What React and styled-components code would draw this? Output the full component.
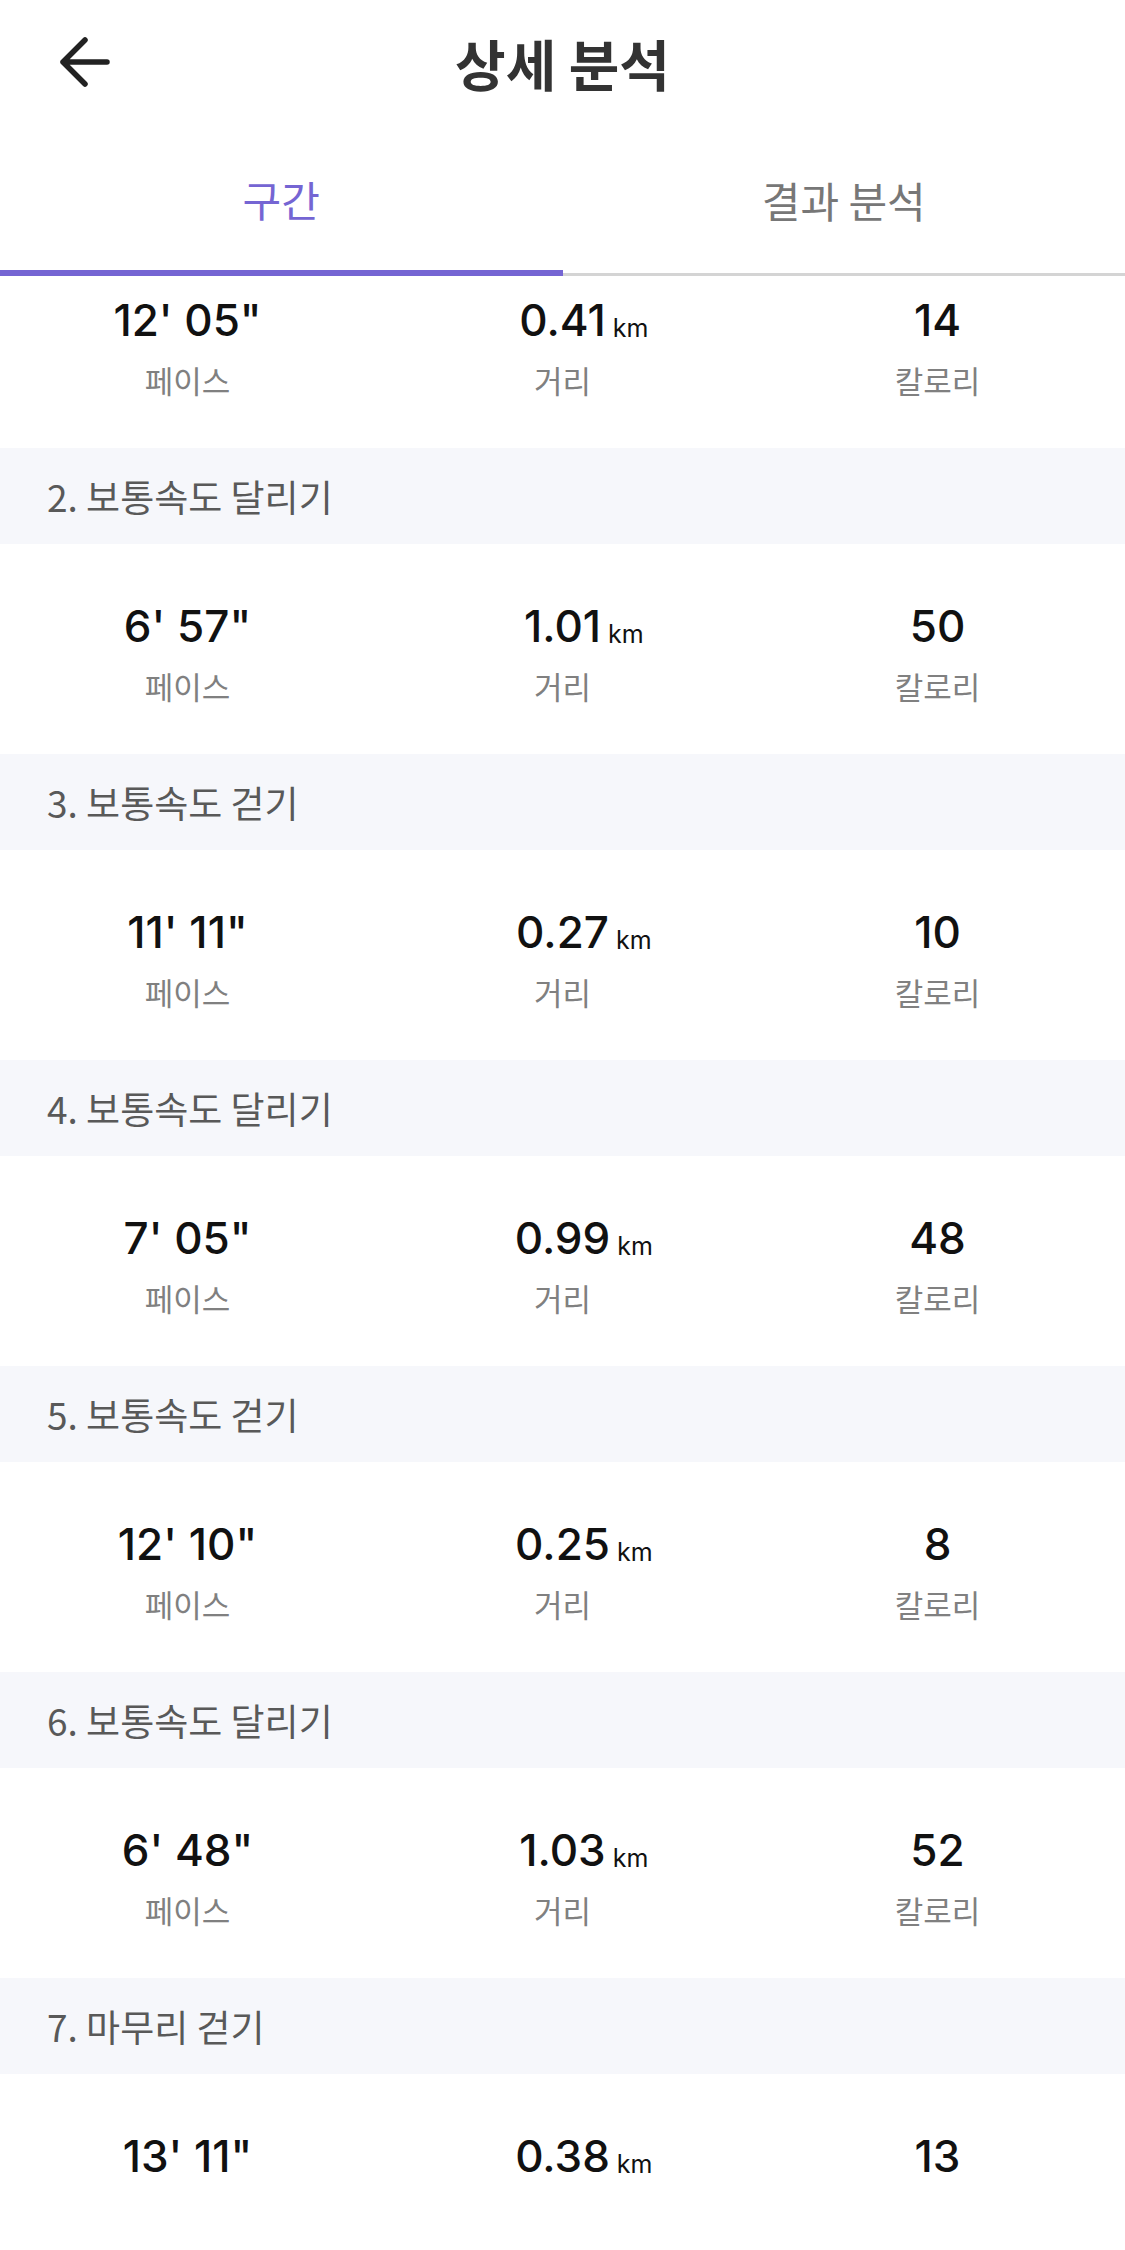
import React from 'react'
import styled, { createGlobalStyle } from 'styled-components'

const GlobalStyle = createGlobalStyle`
    body {
        margin: 0;
        background: #fff;
        font-family: "Noto Sans CJK KR", "Noto Sans", sans-serif;
    }
`

const Page = styled.div`
    width: 1125px;
    height: 2250px;
    overflow: hidden;
    background: #fff;
`

const TopBar = styled.div`
    height: 124px;
    display: grid;
    grid-template-columns: 1fr auto 1fr;
    align-items: center;
`

const BackButton = styled.button`
    justify-self: start;
    margin-left: 58px;
    padding: 0;
    border: none;
    background: none;
    width: 52px;
    height: 52px;
    display: flex;
    align-items: center;
    justify-content: center;
    cursor: pointer;
`

const Title = styled.h1`
    margin: 0;
    font-size: 55px;
    font-weight: 700;
    color: #333;
    line-height: 1.2;
`

const Tabs = styled.div`
    display: grid;
    grid-template-columns: 1fr 1fr;
`

const Tab = styled.div`
    height: 152px;
    box-sizing: border-box;
    padding-top: 2px;
    display: flex;
    align-items: center;
    justify-content: center;
    font-size: 42px;
    color: ${p => (p.$active ? '#7565d3' : '#777')};
    border-bottom: ${p => (p.$active ? '6px solid #7565d3' : '3px solid #d4d4d4')};
`

const Viewport = styled.div`
    height: 1927px;
    overflow: hidden;
`

const List = styled.div`
    margin-top: -38px;
`

const SectionHeader = styled.div`
    height: 96px;
    background: #f6f7fb;
    display: flex;
    align-items: center;
    padding-left: 47px;
    font-size: 37px;
    color: #595959;
`

const StatsRow = styled.div`
    height: 210px;
    box-sizing: border-box;
    padding-top: 56px;
    display: grid;
    grid-template-columns: repeat(3, 1fr);
    background: #fff;
`

const Stat = styled.div`
    display: flex;
    flex-direction: column;
    align-items: center;
    gap: 16px;
`

const Value = styled.div`
    position: relative;
    font-family: Inter, Roboto, "Noto Sans", sans-serif;
    font-size: 44px;
    font-weight: 500;
    line-height: 52px;
    height: 52px;
    color: #111;
    white-space: nowrap;
`

// unit hangs off the right so the number itself stays centred
const Unit = styled.span`
    position: absolute;
    left: 100%;
    bottom: 5px;
    margin-left: 7px;
    font-size: 25px;
    font-weight: 400;
    line-height: 1;
`

const Label = styled.div`
    font-size: 31px;
    line-height: 36px;
    color: #808080;
`

const laps = [
    { title: null, pace: `12' 05"`, dist: '0.41', kcal: 14 },
    { title: '2. 보통속도 달리기', pace: `6' 57"`, dist: '1.01', kcal: 50 },
    { title: '3. 보통속도 걷기', pace: `11' 11"`, dist: '0.27', kcal: 10 },
    { title: '4. 보통속도 달리기', pace: `7' 05"`, dist: '0.99', kcal: 48 },
    { title: '5. 보통속도 걷기', pace: `12' 10"`, dist: '0.25', kcal: 8 },
    { title: '6. 보통속도 달리기', pace: `6' 48"`, dist: '1.03', kcal: 52 },
    { title: '7. 마무리 걷기', pace: `13' 11"`, dist: '0.38', kcal: 13 },
]

const BackArrow = () => (
    <svg width="52" height="52" viewBox="0 0 52 52" fill="none">
        <path d="M49 26H5M27 4L5 26L27 48" stroke="#222" strokeWidth="5.5" strokeLinecap="round" strokeLinejoin="round" />
    </svg>
)

const Lap = ({ lap }) => (
    <>
        {lap.title && <SectionHeader>{lap.title}</SectionHeader>}
        <StatsRow>
            <Stat>
                <Value>{lap.pace}</Value>
                <Label>페이스</Label>
            </Stat>
            <Stat>
                <Value>{lap.dist}<Unit>km</Unit></Value>
                <Label>거리</Label>
            </Stat>
            <Stat>
                <Value>{lap.kcal}</Value>
                <Label>칼로리</Label>
            </Stat>
        </StatsRow>
    </>
)

const App = () => {
    return (
        <Page>
            <GlobalStyle />
            <TopBar>
                <BackButton aria-label="뒤로">
                    <BackArrow />
                </BackButton>
                <Title>상세 분석</Title>
                <div />
            </TopBar>
            <Tabs>
                <Tab $active>구간</Tab>
                <Tab>결과 분석</Tab>
            </Tabs>
            <Viewport>
                <List>
                    {laps.map((lap, i) => (
                        <Lap lap={lap} key={i} />
                    ))}
                </List>
            </Viewport>
        </Page>
    )
}

export default App
